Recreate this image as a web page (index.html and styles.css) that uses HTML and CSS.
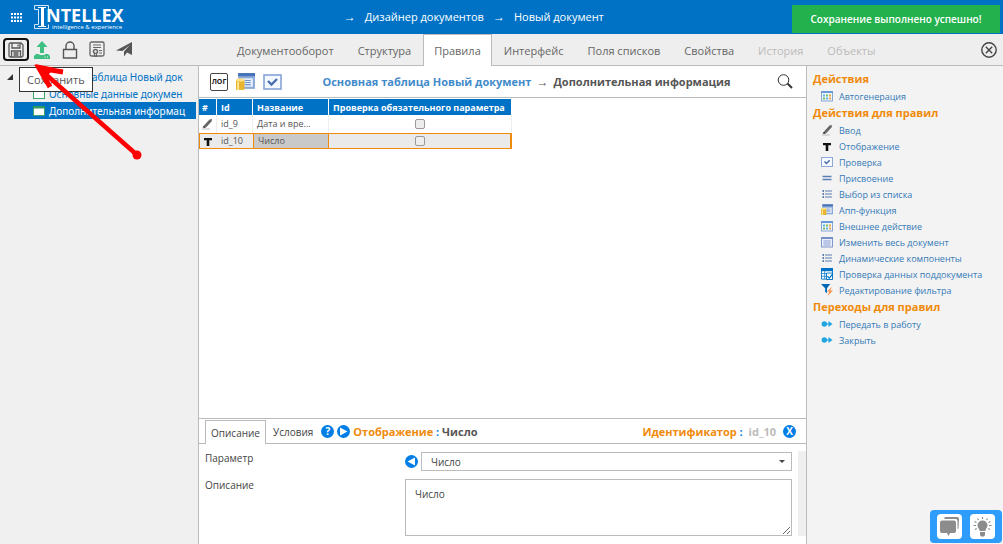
FILE: index.html
```html
<!DOCTYPE html>
<html lang="ru">
<head>
<meta charset="utf-8">
<title>Intellex — Дизайнер документов</title>
<link rel="stylesheet" href="styles.css">
</head>
<body>
<svg class="defs" aria-hidden="true">
  <symbol id="i-pencil" viewBox="0 0 12 12"><path d="M3 7.500 8.500 1.500l2.500-.500-.500 2.500L5.500 9z" fill="#666"/><path d="M1.500 9.500l1.500-2L5.500 9 3.500 10z" fill="#444"/><path d="M1 11h8" stroke="#bbb"/></symbol>
  <symbol id="i-t" viewBox="0 0 12 12"><path d="M2 3h8v2.200H7.300V11H4.700V5.200H2z" fill="#111"/></symbol>
  <symbol id="i-check" viewBox="0 0 12 12"><rect x=".5" y="1.500" width="11" height="9" fill="#f6f9ff" stroke="#8fa8d8"/><path d="M3.500 5.500l2 2 3.200-3.200" fill="none" stroke="#4a6fa8" stroke-width="1.500"/></symbol>
  <symbol id="i-eq" viewBox="0 0 12 12"><path d="M1.500 4.500h9M1.500 7.500h9" stroke="#5d7fb5" stroke-width="1.400"/></symbol>
  <symbol id="i-list" viewBox="0 0 12 12"><path d="M4 3h7M4 6h7M4 9h7" stroke="#5d7fb8" stroke-width="1.200"/><path d="M1.500 3H3M1.500 6H3M1.500 9H3" stroke="#2f5599" stroke-width="1.300"/></symbol>
  <symbol id="i-app" viewBox="0 0 18 17"><rect x="2" y="0" width="16" height="15" fill="#8baad8"/><path d="M2 0h16v3H2z" fill="#4774b8"/><path d="M5 5h11v8H5z" fill="#e7effb"/><path d="M8 7h6M8 9h6M8 11h6" stroke="#6f93cc"/><path d="M0 6.500h8V16H0z" fill="#e9b52e"/><ellipse cx="4" cy="6.500" rx="4" ry="1.500" fill="#ffe38a"/><path d="M2 8.500V16" stroke="#fff0a8" stroke-width="1.500"/></symbol>
  <symbol id="i-gen" viewBox="0 0 12 12"><rect x=".5" y="1.500" width="11" height="9.500" fill="#eef4fc" stroke="#86a7d5"/><path d="M0 1h12v2H0z" fill="#6b98d6"/><path d="M2 4.500h2v2H2zM5 7.500h2v2H5z" fill="#60b3df"/><path d="M5 4.500h2v2H5zM2 7.500h2v2H2z" fill="#78bd65"/><path d="M8 4.500h2v2H8zM8 7.500h2v2H8z" fill="#e7a84a"/></symbol>
  <symbol id="i-doc" viewBox="0 0 12 12"><rect x=".5" y="1.500" width="11" height="9.500" fill="#e9eefa" stroke="#8097c9"/><path d="M0 1h12v2H0z" fill="#7790c7"/><path d="M2 5h8M2 7h8M2 9h8M4 4v6M6 4v6M8 4v6" stroke="#9aabd4" stroke-width=".7"/></symbol>
  <symbol id="i-sub" viewBox="0 0 13 13"><path d="M.5 1h12v11H.5z" fill="#fff" stroke="#0072c6"/><path d="M0 0h13v3.500H0z" fill="#0072c6"/><path d="M1 6h6M1 9h5M4 3v9" stroke="#0072c6" stroke-width=".8"/><path d="M6 5.500h6.500v7H6z" fill="#fff" stroke="#0072c6"/><path d="M7 9l2 2 4-5" fill="none" stroke="#0072c6" stroke-width="1.400"/></symbol>
  <symbol id="i-filter" viewBox="0 0 13 13"><path d="M0 0h10L6.500 4.500V10l-2-1.500v-4z" fill="#0067b5"/><path d="M12 3 6.500 8H9l-2 5 6-6h-3z" fill="#f5924b"/></symbol>
  <symbol id="i-go" viewBox="0 0 12 12"><circle cx="3.300" cy="6" r="2.700" fill="#20a5df"/><path d="M5 6h4" stroke="#20a5df" stroke-width="1.300"/><path d="M7.500 3 11.500 6 7.500 9z" fill="#20a5df"/></symbol>
  <symbol id="i-win" viewBox="0 0 12 10"><rect x=".5" y=".5" width="11" height="9" fill="#fff" stroke="#3ca56b"/><path d="M0 0h12v2.500H0z" fill="#2e9b5d"/></symbol>
  <symbol id="i-page" viewBox="0 0 12 10"><rect x=".5" y=".5" width="11" height="9" fill="#fff" stroke="#3ca56b"/></symbol>
</svg>

<header class="topbar">
  <button class="plain apps" aria-label="Приложения"><svg width="11" height="9" viewBox="0 0 11 9"><path d="M0 1h11M0 4.500h11M0 8h11" stroke="#fff" stroke-width="2" stroke-dasharray="2 1"/></svg></button>
  <a class="logo" href="#" aria-label="Intellex">
    <svg width="15" height="24" viewBox="0 0 15 24"><path d="M14.500 4.500V.500H.500v4h4v15h-4v4h14v-4" fill="none" stroke="#d5e8f7"/><path d="M4 2.500h8M4 21.500h8" stroke="#fff"/><path d="M8.500 2v20" stroke="#fff" stroke-width="3"/></svg>
    <span class="logo-text"><b>NTELLEX</b><small>intelligence &amp; experience</small></span>
  </a>
  <nav class="crumbs"><span class="arrow">→</span><a href="#">Дизайнер документов</a><span class="arrow">→</span><a href="#">Новый документ</a></nav>
  <div class="toast" role="status">Сохранение выполнено успешно!</div>
</header>

<div class="toolbar">
  <div class="tools">
    <button class="plain save" aria-label="Сохранить"><svg width="16" height="16" viewBox="0 0 16 16" fill="none" stroke="#555" stroke-width="1.300"><path d="M1 2.500Q1 1 2.500 1H13l2 2v10.500q0 1.500-1.500 1.500h-11Q1 15 1 13.500zM4 1v5h8V1M3.500 15V9h9v6M5.500 11h5M5.500 13h5M10 2.500V4.500"/></svg></button>
    <button class="plain" aria-label="Выгрузить"><svg width="18" height="18" viewBox="0 0 18 18"><path d="M9 0l5.500 6H11v6H7V6H3.500z" fill="#3fbf84"/><path d="M1 15l2-2h2.500l1.500 1h4l1.500-1H15l2 2v3H1z" fill="#3fbf84"/><path d="M11.500 16h1M14 16h1" stroke="#fff" stroke-width="1.200"/></svg></button>
    <button class="plain" aria-label="Заблокировать"><svg width="16" height="18" viewBox="0 0 16 18" fill="none" stroke="#555" stroke-width="1.400"><path d="M1.500 8.500h13v8.500h-13zM4 8.500V5a4 4 0 0 1 8 0v3.500"/></svg></button>
    <button class="plain" aria-label="Сертификат"><svg width="16" height="17" viewBox="0 0 16 17" fill="none" stroke="#666"><rect x="1" y="1" width="14" height="14" rx="1.500" stroke-width="1.300"/><path d="M4 4h8M4 6.500h8M10 9.500h3M10 12h3"/><circle cx="6.500" cy="10.500" r="2" stroke-width="1.500"/><path d="M5.500 12.500V16l1-1 1 1v-3.500"/></svg></button>
    <button class="plain" aria-label="Отправить"><svg width="16" height="15" viewBox="0 0 16 15"><path d="M16 0v13l-5-2.500-3 4V9.500L14 3 6.500 9 0 8.500z" fill="#555"/></svg></button>
  </div>
  <nav class="tabs">
    <a href="#">Документооборот</a><a href="#">Структура</a><a href="#" class="active">Правила</a><a href="#">Интерфейс</a><a href="#">Поля списков</a><a href="#">Свойства</a><a href="#" class="off">История</a><a href="#" class="off">Объекты</a>
  </nav>
  <button class="plain close" aria-label="Закрыть"><svg width="16" height="16" viewBox="0 0 16 16" fill="none" stroke="#444" stroke-width="1.400"><circle cx="8" cy="8" r="7.200"/><path d="M4.800 4.800l6.400 6.400M11.200 4.800l-6.400 6.400"/></svg></button>
</div>

<div class="workspace">
  <aside class="tree">
    <a href="#" class="root"><svg class="caret" width="6" height="6"><path d="M6 0v6H0z" fill="#333"/></svg><svg width="12" height="10"><use href="#i-page"/></svg><span>Основная таблица Новый док</span></a>
    <a href="#"><svg width="12" height="10"><use href="#i-page"/></svg><span>Основные данные докумен</span></a>
    <a href="#" class="selected"><svg width="12" height="10"><use href="#i-win"/></svg><span>Дополнительная информац</span></a>
  </aside>

  <main class="center">
    <div class="subbar">
      <button class="plain log">ЛОГ</button>
      <button class="plain" aria-label="Апп-функция"><svg width="19" height="18"><use href="#i-app"/></svg></button>
      <button class="plain" aria-label="Проверка"><svg width="19" height="16" viewBox="0 0 19 16"><rect x="1" y="1" width="17" height="14" fill="#f4f8ff" stroke="#86a3d6" stroke-width="1.600"/><path d="M5 7l3.500 3.500L14 5" fill="none" stroke="#4a6fae" stroke-width="2.400"/></svg></button>
      <h1><a href="#">Основная таблица Новый документ</a><span class="arrow">→</span>Дополнительная информация</h1>
      <button class="plain" aria-label="Поиск"><svg width="16" height="15" viewBox="0 0 16 15" fill="none" stroke="#333"><circle cx="6.500" cy="6" r="5.300"/><path d="M10.500 9.500l4.500 4.500" stroke-width="2"/></svg></button>
    </div>
    <div class="grid-area">
      <table class="rules">
        <colgroup><col class="c-num"><col class="c-id"><col class="c-name"><col class="c-check"></colgroup>
        <thead><tr><th>#</th><th>Id</th><th>Название</th><th>Проверка обязательного параметра</th></tr></thead>
        <tbody>
          <tr><td><svg width="12" height="12"><use href="#i-pencil"/></svg></td><td>id_9</td><td>Дата и вре...</td><td><input type="checkbox" aria-label="Проверка id_9"></td></tr>
          <tr class="current"><td><svg width="12" height="12"><use href="#i-t"/></svg></td><td>id_10</td><td class="cell">Число</td><td><input type="checkbox" aria-label="Проверка id_10"></td></tr>
        </tbody>
      </table>
    </div>
    <section class="details">
      <div class="detail-head">
        <button class="plain dtab on">Описание</button><button class="plain dtab">Условия</button>
        <button class="plain round" aria-label="Справка">?</button>
        <button class="plain round" aria-label="Вперёд"><svg width="9" height="9"><path d="M1 0.500 8.500 4.500 1 8.500z" fill="#fff"/></svg></button>
        <strong class="title"><em>Отображение</em> <i>:</i> Число</strong>
        <strong class="ident"><em>Идентификатор</em> <i>:</i> <span>id_10</span></strong>
        <button class="plain round" aria-label="Закрыть">X</button>
      </div>
      <div class="detail-body">
        <form class="form">
          <label for="param">Параметр</label>
          <div class="param">
            <button type="button" class="plain round" aria-label="Назад"><svg width="9" height="9"><path d="M8 0.500.500 4.500 8 8.500z" fill="#fff"/></svg></button>
            <div class="select"><select id="param"><option>Число</option></select></div>
          </div>
          <label for="desc">Описание</label>
          <textarea id="desc">Число</textarea>
        </form>
        <div class="track"></div>
      </div>
    </section>
  </main>

  <aside class="actions">
    <h2>Действия</h2>
    <ul><li><a href="#"><svg><use href="#i-gen"/></svg>Автогенерация</a></li></ul>
    <h2>Действия для правил</h2>
    <ul>
      <li><a href="#"><svg><use href="#i-pencil"/></svg>Ввод</a></li>
      <li><a href="#"><svg><use href="#i-t"/></svg>Отображение</a></li>
      <li><a href="#"><svg><use href="#i-check"/></svg>Проверка</a></li>
      <li><a href="#"><svg><use href="#i-eq"/></svg>Присвоение</a></li>
      <li><a href="#"><svg><use href="#i-list"/></svg>Выбор из списка</a></li>
      <li><a href="#"><svg><use href="#i-app"/></svg>Апп-функция</a></li>
      <li><a href="#"><svg><use href="#i-gen"/></svg>Внешнее действие</a></li>
      <li><a href="#"><svg><use href="#i-doc"/></svg>Изменить весь документ</a></li>
      <li><a href="#"><svg><use href="#i-list"/></svg>Динамические компоненты</a></li>
      <li><a href="#"><svg><use href="#i-sub"/></svg>Проверка данных поддокумента</a></li>
      <li><a href="#"><svg><use href="#i-filter"/></svg>Редактирование фильтра</a></li>
    </ul>
    <h2>Переходы для правил</h2>
    <ul>
      <li><a href="#"><svg><use href="#i-go"/></svg>Передать в работу</a></li>
      <li><a href="#"><svg><use href="#i-go"/></svg>Закрыть</a></li>
    </ul>
  </aside>
</div>

<div class="tooltip" role="tooltip">Сохранить</div>
<svg class="pointer" width="110" height="100" viewBox="34 62 110 100" aria-hidden="true"><path d="M136.500 154.500 42 71" stroke="#f00" stroke-width="4.500"/><path d="M63 72 39 68l11 19" fill="none" stroke="#f00" stroke-width="5"/><path d="M35 64l20 4-10 10z" fill="#f00"/><circle cx="137" cy="155" r="4.500" fill="#f00"/></svg>
<div class="helpers">
  <button class="plain" aria-label="Чат"><svg width="21" height="21" viewBox="0 0 21 21" fill="#8c8c8c"><path d="M6 1h12q2 0 2 2l-.5 9q0 1-1 1V5q0-2-2-2H5z"/><path d="M3 4.500h12q2 0 2 2V15q0 2-2 2h-4l-1.500 3L8 17H3q-2 0-2-2V6.500q0-2 2-2z"/></svg></button>
  <button class="plain" aria-label="Подсказка"><svg width="21" height="21" viewBox="0 0 21 21"><path d="M10.500 4.500a5 5 0 0 1 5 5c0 2.500-2 3-2.200 5.500H7.700C7.500 12.500 5.500 12 5.500 9.500a5 5 0 0 1 5-5zM8 16h5v3l-1 1.500H9L8 19z" fill="#8c8c8c"/><path d="M10.500 1v2M5.500 2.500l1 1.500M15.500 2.500l-1 1.500M2.500 5.500l2 1M18.500 5.500l-2 1M1.500 9.500h2.500M19.500 9.500H17M3 13.500l1.700-1M18 13.500l-1.700-1" stroke="#8c8c8c" stroke-width="1.200"/></svg></button>
</div>
</body>
</html>
```

FILE: styles.css
```css
* { box-sizing: border-box; }
body {
  margin: 0;
  height: 100vh;
  display: flex;
  flex-direction: column;
  overflow: hidden;
  font-family: "Open Sans", "Noto Sans", sans-serif;
  font-size: 9px;
  color: #555;
  background: #fff;
}
a { color: inherit; text-decoration: none; }
svg { display: block; flex: none; }
.defs { position: absolute; width: 0; height: 0; }
.plain {
  display: flex;
  align-items: center;
  justify-content: center;
  margin: 0;
  padding: 0;
  border: 0;
  background: none;
  font: inherit;
  color: inherit;
}
.arrow { font-family: "Liberation Sans", sans-serif; font-size: 12px; }

.topbar {
  display: grid;
  grid-template-columns: auto auto 1fr auto;
  height: 34px;
  flex: none;
  align-items: center;
  background: #0072c6;
  color: #fff;
}
.apps { margin-left: 11px; }
.logo { display: flex; align-items: flex-start; margin-left: 12px; }
.logo-text { display: flex; flex-direction: column; margin-left: -3px; padding-top: 2px; }
.logo-text b { font-size: 18px; line-height: 17px; }
.logo-text small { font-size: 6px; line-height: 6px; margin-left: 6px; }
.crumbs { display: flex; justify-content: center; gap: 9px; font-size: 11px; font-weight: 500; line-height: 16px; padding-left: 32px; }
.toast {
  align-self: end;
  margin: 0 3px 1px 0;
  width: 208px;
  height: 28px;
  line-height: 28px;
  text-align: center;
  font-size: 10px;
  font-weight: 600;
  background: #22b14c;
}

.toolbar {
  display: flex;
  align-items: stretch;
  height: 32px;
  flex: none;
  background: #eee;
  border-bottom: 1px solid #bbb;
}
.tools { display: flex; align-items: center; gap: 11px; width: 220px; padding-left: 3px; }
.save { width: 26px; height: 23px; border: 2px solid #111; border-radius: 4px; margin-right: -7px; }
.tabs { display: flex; flex: 1; font-size: 11px; line-height: 32px; color: #666; padding-left: 5px; }
.tabs a { padding: 0 11px; border: 1px solid transparent; border-bottom: 0; height: 32px; }
.tabs .active { padding: 0 10px; background: #fff; border-color: #bbb; }
.tabs .off { color: #bbb; }
.close { margin-right: 6px; }

.workspace { flex: 1; min-height: 0; display: grid; grid-template-columns: 198px minmax(0, 1fr) 196px; }
.tree { background: #f0f0f0; padding: 2px 2px 0 14px; font-family: "Noto Sans", sans-serif; font-size: 10px; color: #0072c6; }
.tree a { display: flex; align-items: center; gap: 4px; height: 17px; padding-left: 19px; }
.tree span { white-space: nowrap; }
.tree .root { padding-left: 0; margin-left: -7px; }
.tree .caret { margin-right: 4px; }
.tree .selected { background: #0072c6; color: #fff; }

.center { display: flex; flex-direction: column; border: solid #bbb; border-width: 0 1px; min-width: 0; }
.subbar { display: flex; align-items: center; gap: 8px; height: 32px; flex: none; padding: 0 13px 0 11px; border-bottom: 1px solid #bbb; }
.log { width: 18px; height: 18px; border: 1px solid #444; border-radius: 2px; font-size: 7px; font-weight: 700; color: #222; }
h1 { flex: 1; margin: 0 6px 0 0; text-align: center; font-size: 11px; line-height: 16px; color: #555; }
h1 a { color: #428bca; }
h1 .arrow { font-weight: 400; margin: 0 5px; }

.grid-area { flex: 1; min-height: 0; padding-top: 1px; }
.rules { border-collapse: separate; border-spacing: 0; table-layout: fixed; width: 313px; }
.c-num { width: 18px; }
.c-id { width: 36px; }
.c-name { width: 76px; }
.rules th { height: 16px; padding: 0 4px; background: #0072c6; color: #fff; text-align: left; border-right: 1px solid #fff; line-height: 15px; white-space: nowrap; }
.rules th:first-child { padding: 0 3px; }
.rules td { height: 18px; padding: 0 4px; border-right: 1px solid #eee; line-height: 14px; white-space: nowrap; }
.rules td:first-child { padding: 0 2px; }
.rules td:last-child { text-align: center; }
.rules input { appearance: none; display: block; width: 10px; height: 10px; margin: 0 auto; border: 1px solid #999; border-radius: 2px; background: #eee; }
.rules .current td { height: 15px; background: #eaeaea; border: solid #f08a0a; border-width: 1px 0; }
.rules .current td:first-child { border-left-width: 1px; }
.rules .current td:last-child { border-right-width: 2px; }
.rules .current .cell { background: #c9c9c9; border-width: 1px; }

.details { flex: none; border-top: 1px solid #bbb; }
.detail-head { display: flex; align-items: center; gap: 3px; height: 25px; padding: 0 10px 0 6px; border-bottom: 1px solid #bbb; }
.dtab { align-self: flex-end; height: 23px; padding: 0 5px 0 4px; font-size: 10px; color: #444; }
.dtab.on { height: 24px; padding: 0 5px; margin-bottom: -1px; border: 1px solid #bbb; border-bottom: 0; background: #fff; }
.round { flex: none; width: 13px; height: 13px; border-radius: 50%; background: #007ee5; color: #fff; font-size: 10px; font-weight: 700; line-height: 13px; }
strong { font-size: 11px; color: #555; }
em { font-style: normal; color: #f08a0a; }
strong i { font-style: normal; color: #007ee5; }
.title { flex: 1; }
.ident { margin-right: 4px; }
.ident span { color: #bbb; margin-left: 3px; }
.detail-body { display: flex; gap: 6px; padding: 7px 0 8px 6px; }
.form { flex: 1; display: grid; grid-template-columns: 200px 1fr; row-gap: 8px; padding-top: 1px; align-items: start; font-size: 10px; color: #444; }
.form label { line-height: 13px; }
.param { display: flex; align-items: center; gap: 3px; }
.select { flex: 1; display: flex; align-items: center; border: 1px solid #bbb; height: 19px; }
.select::after { content: ""; border: 3px solid transparent; border-top-color: #444; border-bottom: 0; margin-right: 6px; }
select { appearance: none; flex: 1; border: 0; background: none; padding: 0 9px; font: inherit; color: inherit; height: 17px; }
textarea { display: block; width: 100%; height: 57px; margin: 0; padding: 7px 9px; border: 1px solid #bbb; border-radius: 0; font: inherit; color: inherit; resize: vertical; }
.track { width: 8px; background: #efefef; }

.actions { background: #f3f3f3; padding: 4px 6px; color: #337ab7; }
h2 { margin: 0; font-size: 11px; line-height: 18px; color: #f08a0a; }
.actions ul { list-style: none; margin: 0; padding: 0 0 0 8px; }
.actions a { display: flex; align-items: center; gap: 6px; height: 16px; }
.actions a svg { width: 12px; height: 12px; }

.tooltip { position: absolute; left: 19px; top: 67px; width: 74px; height: 25px; line-height: 23px; padding-left: 7px; border: 1px solid #333; background: #fff; font-size: 11px; }
.pointer { position: absolute; left: 34px; top: 62px; }
.helpers { position: absolute; right: 1px; bottom: 1px; display: flex; gap: 8px; padding: 4px 7px; border-radius: 4px; background: #2d9cfb; }
.helpers button { width: 25px; height: 25px; border-radius: 4px; background: #fff; }
```
